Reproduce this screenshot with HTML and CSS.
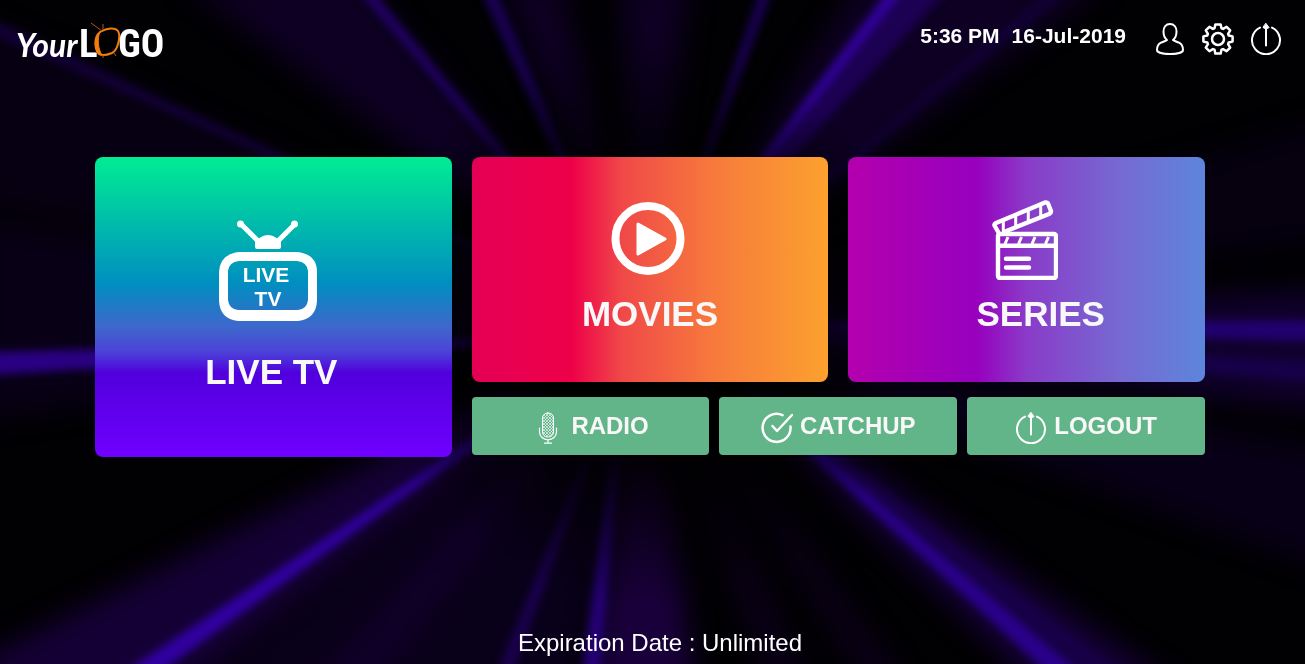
FILE: index.html
```html
<!DOCTYPE html>
<html lang="en">
<head>
<meta charset="utf-8">
<meta name="viewport" content="width=device-width, initial-scale=1">
<title>Home</title>
<link rel="stylesheet" href="styles.css">
</head>
<body>
<svg class="backdrop" viewBox="0 0 1305 664" preserveAspectRatio="none" aria-hidden="true">
  <defs>
    <filter id="wide" x="-20%" y="-20%" width="140%" height="140%" color-interpolation-filters="sRGB"><feGaussianBlur stdDeviation="14"/></filter>
    <filter id="soft" x="-20%" y="-20%" width="140%" height="140%" color-interpolation-filters="sRGB"><feGaussianBlur stdDeviation="4"/></filter>
    <radialGradient id="core" gradientUnits="userSpaceOnUse" cx="645" cy="325" r="280">
      <stop offset="0.4" stop-color="#000"/>
      <stop offset="1" stop-color="#000" stop-opacity="0"/>
    </radialGradient>
  </defs>
  <rect width="1305" height="664" fill="#010003"/>
  <g filter="url(#wide)" fill="#12002e" opacity="0.75">
    <path d="M645 325L180-20L360-20Z"/>
    <path d="M645 325L500-20L560-20Z"/>
    <path d="M645 325L620-20L690-20Z"/>
    <path d="M645 325L860-20L1110-20Z"/>
    <path d="M645 325L-20 20L-20 200Z" fill="#0a0018"/>
    <path d="M645 325L-20 220L-20 420Z" fill="#0b001c"/>
    <path d="M645 325L-20 660L-20 690L180 690Z" fill="#1c0046"/>
    <path d="M645 325L200 690L570 690Z" fill="#0c0022"/>
    <path d="M645 325L310 690L370 690Z" fill="#160036"/>
    <path d="M645 325L590 690L695 690Z" fill="#22004e"/>
    <path d="M645 325L770 690L810 690Z" fill="#0f0020"/>
    <path d="M645 325L870 690L910 690Z" fill="#0f0020"/>
    <path d="M665 325L1040 690L1180 690Z" fill="#1c0048"/>
    <path d="M645 325L1330 450L1330 570Z" fill="#0b001e"/>
    <path d="M645 325L1330 290L1330 410Z" fill="#16003c"/>
    <path d="M645 325L1330 120L1330 240Z" fill="#080014"/>
  </g>
  <g filter="url(#soft)" opacity="0.9">
    <path d="M645 325L357-10L372-10Z" fill="#260072"/>
    <path d="M635 325L480-10L496-10Z" fill="#1c005a"/>
    <path d="M645 325L760-10L773-10Z" fill="#1c005a"/>
    <path d="M635 325L889-10L948-10Z" fill="#1e0058"/>
    <path d="M635 325L889-10L904-10Z" fill="#3800b0"/>
    <path d="M645 325L1052-10L1070-10Z" fill="#12003a"/>
    <path d="M645 325L-10 18L-10 34Z" fill="#14003a"/>
    <path d="M645 335L-10 352L-10 375Z" fill="#2e0090"/>
    <path d="M645 325L1315 320L1315 341Z" fill="#240076"/>
    <path d="M645 325L1315 362L1315 382Z" fill="#18004c"/>
    <path d="M625 338L120 675L156 675Z" fill="#3400ac"/>
    <path d="M640 325L496 675L512 675Z" fill="#1c0054"/>
    <path d="M630 325L582 675L600 675Z" fill="#280080"/>
    <path d="M670 325L1050 675L1125 675Z" fill="#180048"/>
    <path d="M670 325L1050 675L1082 675Z" fill="#2c0094"/>
  </g>
  <rect width="1305" height="664" fill="url(#core)"/>
</svg>

<div class="page">
  <header class="topbar">
    <a class="logo" href="#" aria-label="Your Logo">
      <svg width="148" height="40" viewBox="0 0 148 40">
        <text class="logo-script" x="0" y="34">Your</text>
        <text class="logo-block" x="63" y="34">L</text>
        <path d="M84 9C91 5 99 4 102 8C105 13 102 27 96 30C91 32 86 33 83 31C79 27 77 15 84 9Z" fill="none" stroke="#f57c0a" stroke-width="2"/>
        <path d="M84 9C77 15 79 28 83 31L86 32C82 26 81 16 84 9Z" fill="#f57c0a" stroke="#f57c0a" stroke-width="1"/>
        <path d="M86 8L75 0M87 7V1M98 30L100 33M87 32V35" fill="none" stroke="#b85a08" stroke-width="1"/>
        <text class="logo-block" x="102" y="34">GO</text>
      </svg>
    </a>
    <div class="status">
      <p class="clock"><time>5:36 PM</time><time datetime="2019-07-16">16-Jul-2019</time></p>
      <nav class="tools" aria-label="Account">
        <button class="tool" type="button" aria-label="Profile">
          <svg viewBox="0 0 32 32"><path d="M16 1C12 1 9.500 4 9.500 8.500C9.500 12.500 11 15.500 13 17C12 18 9.500 18.500 7 19.700C4 21.200 3 23.500 3 27C3 29.500 9 31 16 31S29 29.500 29 27C29 23.500 28 21.200 25 19.700C22.500 18.500 20 18 19 17C21 15.500 22.500 12.500 22.500 8.500C22.500 4 20 1 16 1Z"/></svg>
        </button>
        <button class="tool" type="button" aria-label="Settings">
          <svg viewBox="-16 -16 32 32"><path class="thick" d="M-3.500-10.700L-2.600-14.600H2.600L3.500-10.700L5.100-10.100L8.600-12.200L12.200-8.600L10.100-5.100L10.700-3.500L14.600-2.600V2.600L10.700 3.500L10.100 5.100L12.200 8.600L8.600 12.200L5.100 10.100L3.500 10.700L2.600 14.600H-2.600L-3.500 10.700L-5.100 10.100L-8.600 12.200L-12.200 8.600L-10.100 5.100L-10.700 3.500L-14.600 2.600V-2.600L-10.700-3.500L-10.100-5.100L-12.200-8.600L-8.600-12.200L-5.100-10.100Z"/><circle class="thick" r="6"/></svg>
        </button>
        <button class="tool" type="button" aria-label="Log out">
          <svg viewBox="0 0 32 32"><path d="M10 4.600A14 14 0 1 0 22 4.600M16 4V22.500"/><path class="solid" d="M16 0.500L19 4.500Q19 5.500 16 5.500T13 4.500Z"/></svg>
        </button>
      </nav>
    </div>
  </header>

  <main class="menu">
    <a class="card card-live" href="#">
      <svg class="card-icon" width="98" height="102" viewBox="0 0 98 102">
        <path d="M22 4L39 21M76 4L59 21" stroke="#fff" stroke-width="5" stroke-linecap="round"/>
        <circle cx="21.500" cy="4" r="3.500" fill="#fff"/><circle cx="75.500" cy="4" r="3.500" fill="#fff"/>
        <path d="M36 27V20Q40 19 42 17Q49 13 56 17Q58 19 62 20V27Q62 29 60 29H38Q36 29 36 27Z" fill="#fff"/>
        <path fill-rule="evenodd" fill="#fff" d="M20 32H78Q98 34 98 52V81Q97 99 79 101H19Q1 99 0 81V52Q1 34 20 32ZM20 41Q10 42 9 51V80Q10 89 19 90H79Q88 89 89 80V51Q88 42 78 41Z"/>
        <text class="tv-text" x="47" y="62">LIVE</text>
        <text class="tv-text" x="49" y="86">TV</text>
      </svg>
      <span class="card-label">LIVE TV</span>
    </a>

    <div class="side">
      <div class="row row-large">
        <a class="card card-movies" href="#">
          <svg class="card-icon" width="74" height="74" viewBox="0 0 74 74">
            <circle cx="37" cy="36.500" r="32.500" fill="none" stroke="#fff" stroke-width="8"/>
            <path d="M27 22L54 37L27 52Z" fill="#fff" stroke="#fff" stroke-width="3" stroke-linejoin="round"/>
          </svg>
          <span class="card-label">MOVIES</span>
        </a>
        <a class="card card-series" href="#">
          <svg class="card-icon" width="66" height="80" viewBox="0 0 66 80" fill="none" stroke="#fff" stroke-width="4.400" stroke-linecap="round" stroke-linejoin="round">
            <rect x="6" y="34" width="58" height="44" rx="2"/>
            <path d="M6 45.700H64M14 58.700H37M14 67.500H37"/>
            <path d="M6.500 32.500L2.500 25.500Q2 24 4 23L53 2.500Q55 2 56 3.500L59 11Q59 13 57 14L12 32"/>
            <path d="M11.300 20V31M23.700 15V26M36.300 10V21M48.700 5V16M16 37L13 44M29.500 37L26.500 44M43 37L40 44M56.500 37L53.500 44" stroke-width="3" stroke-linecap="butt"/>
          </svg>
          <span class="card-label">SERIES</span>
        </a>
      </div>
      <div class="row row-small">
        <a class="action" href="#">
          <svg viewBox="0 0 32 32">
            <defs><pattern id="mesh" width="3" height="3" patternUnits="userSpaceOnUse"><path d="M0 0L3 3M3 0L0 3" stroke="#fff" stroke-width="0.600"/></pattern></defs>
            <rect x="10.500" y="1" width="11" height="24" rx="5" fill="url(#mesh)" stroke-width="1"/>
            <path d="M7.500 16V20A8.500 7.800 0 0 0 24.500 20V16M16 28V31M12.500 31.200H19.500" stroke-width="1.200"/>
          </svg>
          <span>RADIO</span>
        </a>
        <a class="action" href="#">
          <svg viewBox="0 0 32 32"><path class="thick" d="M21.500 3.200A14 14 0 1 0 29.500 14.500M11.500 14L16 19L31 3"/></svg>
          <span>CATCHUP</span>
        </a>
        <a class="action" href="#">
          <svg viewBox="0 0 32 32"><path d="M10 4.600A14 14 0 1 0 22 4.600M16 4V22.500"/><path class="solid" d="M16 0.500L19 4.500Q19 5.500 16 5.500T13 4.500Z"/></svg>
          <span>LOGOUT</span>
        </a>
      </div>
    </div>
  </main>

  <footer class="expiry">Expiration Date : Unlimited</footer>
</div>
</body>
</html>
```
FILE: styles.css
```css
* {
  box-sizing: border-box;
}

body {
  margin: 0;
  background: #000;
  color: #fff;
  font-family: "Liberation Sans", Arial, sans-serif;
}

a {
  color: inherit;
  text-decoration: none;
}

svg {
  display: block;
}

.backdrop {
  position: fixed;
  inset: 0;
  z-index: -1;
  width: 100%;
  height: 100%;
}

.page {
  display: flex;
  flex-direction: column;
  min-height: 100vh;
}

.topbar {
  display: flex;
  justify-content: space-between;
  align-items: flex-start;
  padding: 23px 23px 0 16px;
}

.logo svg {
  overflow: visible;
  fill: #fff;
}

.logo-script {
  font: italic 700 32px Lato, sans-serif;
}

.logo-block {
  font: 700 39px "Liberation Sans Narrow", "Roboto Condensed", "Open Sans Condensed", "Liberation Sans", sans-serif;
}

.status {
  display: flex;
  gap: 28px;
}

.clock {
  display: flex;
  gap: 12px;
  margin: 0;
  font-size: 21px;
  font-weight: 700;
  line-height: 26px;
}

.tools {
  display: flex;
  gap: 16px;
}

.tool {
  width: 32px;
  height: 32px;
  padding: 0;
  border: 0;
  background: none;
  cursor: pointer;
}

.tool svg,
.action svg {
  width: 32px;
  height: 32px;
  fill: none;
  stroke: #fff;
  stroke-width: 2;
  stroke-linecap: round;
  stroke-linejoin: round;
}

.tool .thick,
.action .thick {
  stroke-width: 2.500;
}

.tool .solid,
.action .solid {
  fill: #fff;
  stroke-width: 1;
}

.menu {
  display: grid;
  grid-template-columns: calc((100% - 40px) / 3) 1fr;
  gap: 20px;
  align-items: start;
  margin: 94px 100px 32px 95px;
}

.side {
  display: grid;
  gap: 15px;
}

.row {
  display: grid;
}

.row-large {
  grid-template-columns: repeat(2, 1fr);
  gap: 20px;
}

.row-small {
  grid-template-columns: repeat(3, 1fr);
  gap: 10px;
}

.card {
  display: flex;
  flex-direction: column;
  align-items: center;
  border-radius: 8px;
  color: #f8f8f8;
  font-size: 35px;
  font-weight: 700;
  line-height: 40px;
}

.card-icon {
  margin-right: 4px;
}

.card-live {
  gap: 30px;
  min-height: 300px;
  padding: 63px 4px 64px 0;
  background: linear-gradient(#00ed93 0%, #008fc0 42%, #3f66cc 57%, #4b42d8 65%, #5000dd 72%, #7000ff 100%);
}

.card-live .card-icon {
  margin-right: 6px;
}

.card-movies {
  gap: 18px;
  min-height: 225px;
  padding: 45px 0 46px;
  background: linear-gradient(90deg, #e50055 0%, #ee0049 28%, #f04848 42%, #f77a3c 68%, #fca12e 100%);
}

.card-series {
  gap: 14px;
  min-height: 225px;
  padding: 43px 0 46px;
  background: linear-gradient(90deg, #b400ae 0%, #9700be 36%, #8a3bc8 50%, #7669d2 76%, #5d85dc 100%);
}

.card-series .card-label {
  padding-left: 28px;
}

.tv-text {
  fill: #fff;
  font-size: 21px;
  text-anchor: middle;
}

.action {
  display: flex;
  justify-content: center;
  align-items: center;
  gap: 7px;
  min-height: 58px;
  border-radius: 4px;
  background: #62b489;
  color: #f8f8f8;
  font-size: 24px;
  font-weight: 700;
  line-height: 28px;
}

.action svg {
  margin-top: 4px;
}

.expiry {
  margin-top: auto;
  padding: 0 0 7px 15px;
  text-align: center;
  font-size: 24px;
  line-height: 28px;
}
```
